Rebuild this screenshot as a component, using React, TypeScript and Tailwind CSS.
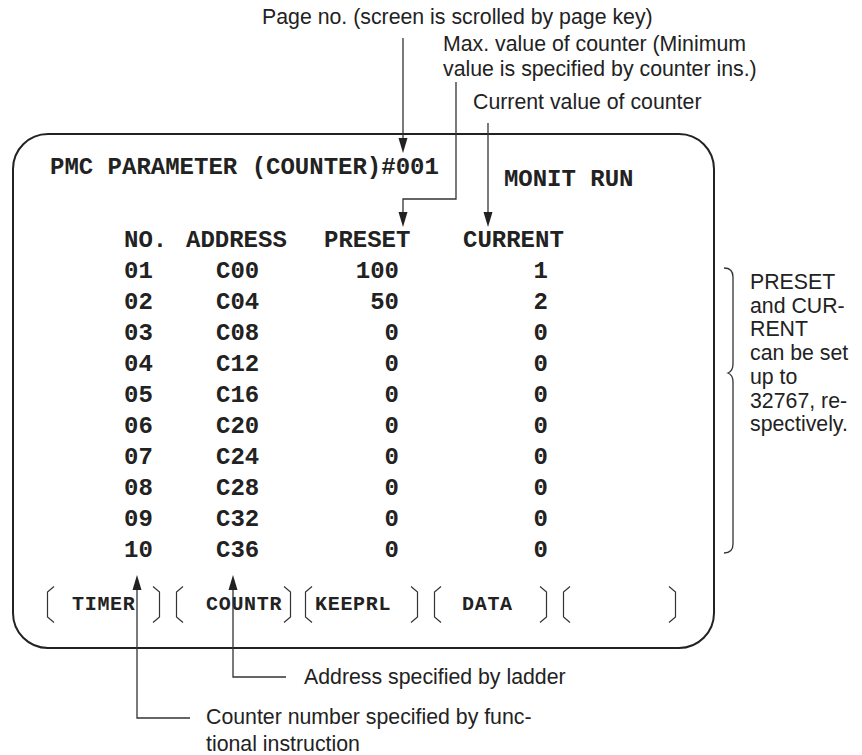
const rows = [
  ["01", "C00", "100", "1"],
  ["02", "C04", "50", "2"],
  ["03", "C08", "0", "0"],
  ["04", "C12", "0", "0"],
  ["05", "C16", "0", "0"],
  ["06", "C20", "0", "0"],
  ["07", "C24", "0", "0"],
  ["08", "C28", "0", "0"],
  ["09", "C32", "0", "0"],
  ["10", "C36", "0", "0"],
];

const softKeys = [
  { label: "TIMER", pad: "pl-[16px]" },
  { label: "COUNTR", pad: "pl-[21px]" },
  { label: "KEEPRL", pad: "pl-[1px]" },
  { label: "DATA", pad: "pl-[19px]" },
  { label: "", pad: "" },
];

function Bracket({ side }: { side: "left" | "right" }) {
  const d = side === "left" ? "M8 0.5 L1.5 6 V31 L8 36.5" : "M2 0.5 L8.5 6 V31 L2 36.5";
  return (
    <svg aria-hidden="true" viewBox="0 0 10 37" className="h-[37px] w-[10px] shrink-0">
      <path d={d} fill="none" stroke="#333" strokeWidth="1.2" />
    </svg>
  );
}

function SoftKey({ label, pad }: { label: string; pad: string }) {
  return (
    <div className="flex h-[37px] w-[115px] items-center">
      <Bracket side="left" />
      <span className={`flex-1 text-[20px] leading-none font-bold tracking-[0.7px] ${pad}`}>
        {label}
      </span>
      <Bracket side="right" />
    </div>
  );
}

function Connectors() {
  return (
    <svg
      aria-hidden="true"
      viewBox="0 0 862 755"
      className="pointer-events-none absolute inset-0 h-[755px] w-[862px]"
    >
      <g fill="none" stroke="#333" strokeWidth="1.3">
        <path d="M403 38 V140" />
        <path d="M456 82 V199 H403 V213" />
        <path d="M488 123 V213" />
        <path d="M137 589 V718 H190" />
        <path d="M233 589 V677 H286" />
        <path d="M724 268 Q733 268 733 277 V364 Q733 371 728 373 Q733 375 733 382 V544 Q733 553 724 553" />
      </g>
      <g fill="#222">
        <polygon points="398.5,138 407.5,138 403,153" />
        <polygon points="398.5,212 407.5,212 403,227" />
        <polygon points="483.5,212 492.5,212 488,227" />
        <polygon points="132.5,590 141.5,590 137,575" />
        <polygon points="228.5,590 237.5,590 233,575" />
      </g>
    </svg>
  );
}

export default function App() {
  return (
    <div className="relative h-[755px] w-[862px] overflow-hidden bg-white font-['Liberation_Sans',Arial,sans-serif] text-[21.3px] leading-[25px] text-[#222]">
      <div className="pt-[5px]">
        <p className="pl-[262px] whitespace-nowrap">Page no. (screen is scrolled by page key)</p>
        <p className="mt-[2px] pl-[443px] whitespace-nowrap">
          Max. value of counter (Minimum
          <br />
          value is specified by counter ins.)
        </p>
        <p className="mt-[8px] pl-[473px] whitespace-nowrap">Current value of counter</p>
      </div>

      <div className="mt-[18px] flex items-start">
        <section className="ml-[12px] box-border h-[516px] w-[703px] shrink-0 rounded-[36px] border-2 border-[#222] font-['Liberation_Mono','Courier_New',monospace] font-bold">
          <div className="flex items-start pt-[19px]">
            <h1 className="pl-[36px] text-[24px] leading-[28px] whitespace-nowrap">
              PMC PARAMETER (COUNTER)#001
            </h1>
            <span className="mt-[12px] ml-[65px] text-[24px] leading-[28px] whitespace-nowrap">
              MONIT RUN
            </span>
          </div>

          <div className="mt-[31px] pl-[110px] text-[24px] leading-[31px]">
            <div className="flex">
              <span className="w-[62px]">NO.</span>
              <span className="w-[138px]">ADDRESS</span>
              <span className="w-[86px]">PRESET</span>
              <span className="w-[153px] pl-[53px]">CURRENT</span>
            </div>
            {rows.map(([no, addr, preset, current]) => (
              <div key={no} className="flex">
                <span className="w-[62px]">{no}</span>
                <span className="w-[138px] pl-[30px]">{addr}</span>
                <span className="w-[86px] pr-[11px] text-right">{preset}</span>
                <span className="w-[153px] pr-[15px] text-right">{current}</span>
              </div>
            ))}
          </div>

          <div className="mt-[20px] flex gap-[14px] pl-[32px]">
            {softKeys.map((k, i) => (
              <SoftKey key={i} label={k.label} pad={k.pad} />
            ))}
          </div>
        </section>

        <p className="mt-[138px] ml-[35px] leading-[23.7px] whitespace-nowrap">
          PRESET
          <br />
          and CUR-
          <br />
          RENT
          <br />
          can be set
          <br />
          up to
          <br />
          32767, re-
          <br />
          spectively.
        </p>
      </div>

      <p className="mt-[16px] pl-[304px] whitespace-nowrap">Address specified by ladder</p>
      <p className="mt-[14px] pl-[206px] leading-[27px] whitespace-nowrap">
        Counter number specified by func-
        <br />
        tional instruction
      </p>

      <Connectors />
    </div>
  );
}
